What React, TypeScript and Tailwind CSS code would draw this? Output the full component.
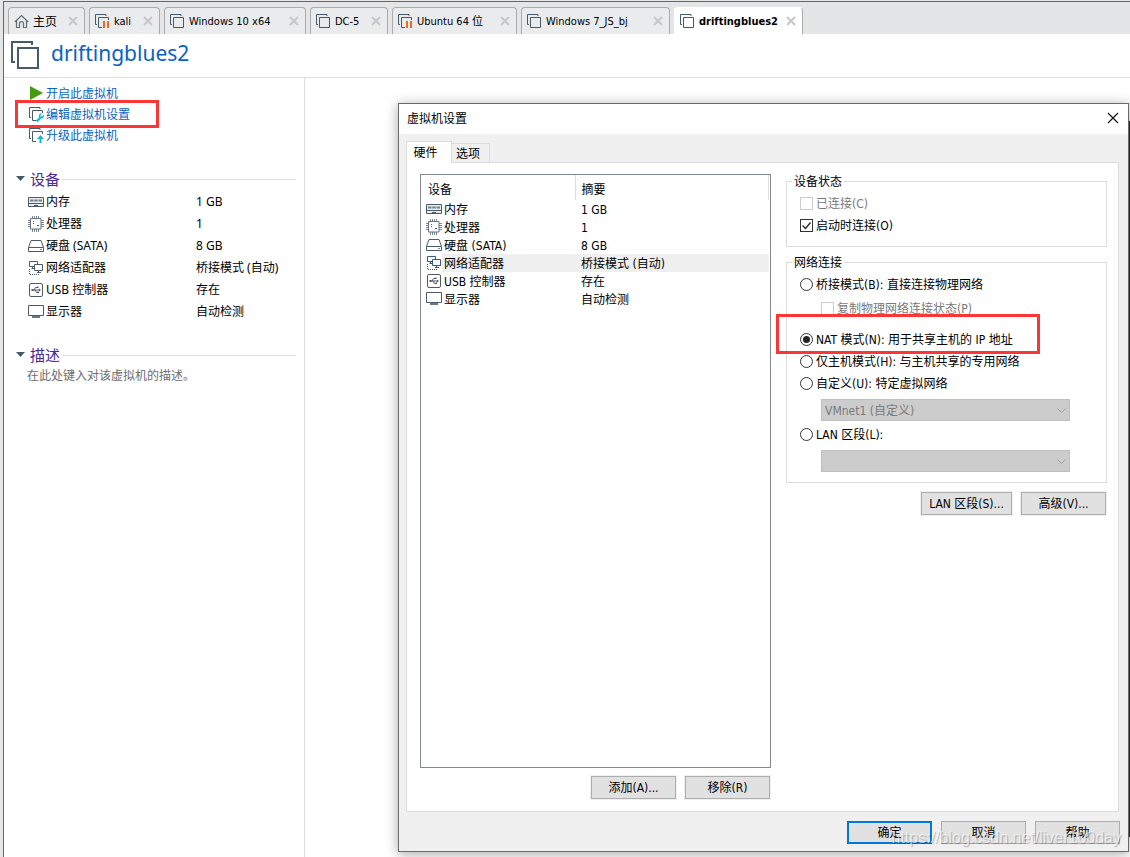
import { useState } from "react";
import type { ReactNode } from "react";
import clsx from "clsx";

type IconName = "memory" | "cpu" | "disk" | "network" | "usb" | "display";

type Device = {
  icon: IconName;
  name: string;
  value: string;
};

type Tab = {
  label: string;
  icon: "home" | "vm" | "paused";
  width: string;
};

const tabs: Tab[] = [
  { label: "主页", icon: "home", width: "w-[77px]" },
  { label: "kali", icon: "paused", width: "w-[71px]" },
  { label: "Windows 10 x64", icon: "vm", width: "w-[142px]" },
  { label: "DC-5", icon: "vm", width: "w-[78px]" },
  { label: "Ubuntu 64 位", icon: "paused", width: "w-[125px]" },
  { label: "Windows 7_JS_bj", icon: "vm", width: "w-[149px]" },
  { label: "driftingblues2", icon: "vm", width: "w-[129px]" },
];

const devices: Device[] = [
  { icon: "memory", name: "内存", value: "1 GB" },
  { icon: "cpu", name: "处理器", value: "1" },
  { icon: "disk", name: "硬盘 (SATA)", value: "8 GB" },
  { icon: "network", name: "网络适配器", value: "桥接模式 (自动)" },
  { icon: "usb", name: "USB 控制器", value: "存在" },
  { icon: "display", name: "显示器", value: "自动检测" },
];

function VmIcon({ badge, size = 15 }: { badge?: ReactNode; size?: number }) {
  return (
    <svg
      width={size}
      height={size}
      viewBox="0 0 15 15"
      fill="none"
      stroke="#465a69"
      className="shrink-0"
    >
      <path d="M2 10.5H.5V.5H11V2" />
      {badge ? <path d="M7 13.5H3.5V3.5H13.5V6" /> : <path d="M3.5 3.5h10v10h-10z" />}
      {badge}
    </svg>
  );
}

const pauseBadge = (
  <path d="M8 7h2v7H8zM12 7h2v7h-2z" fill="#f26a21" stroke="none" />
);

const wrenchBadge = (
  <>
    <path d="M7.5 14.5l4-4" stroke="#12b5d3" strokeWidth="2.2" />
    <path
      d="M13.2 6L11.5 7.8v1.7h1.7L15 7.800c.5 2.200-1 4-3 3.700-1.800-.3-2.500-2-2-3.500.5-1.500 1.900-2.300 3.200-2z"
      fill="#12b5d3"
      stroke="none"
    />
  </>
);

const upBadge = (
  <path d="M11.500 7L8 11h2.500v4h2v-4H15z" fill="#12b5d3" stroke="none" />
);

function HomeIcon() {
  return (
    <svg
      width="15"
      height="15"
      viewBox="0 0 15 15"
      fill="none"
      stroke="#5d6e7a"
      strokeWidth="1.2"
      className="shrink-0"
    >
      <path d="M.8 8L7.500 1.500 14.200 8" />
      <path d="M2.500 7v6.500h3V9.500c0-2.600 4-2.600 4 0v4h3V7" />
    </svg>
  );
}

function DeviceIcon({ name, active }: { name: IconName; active?: boolean }) {
  return (
    <svg
      width="16"
      height="16"
      viewBox="0 0 16 16"
      fill="none"
      stroke={active ? "#2c5a85" : "#4b5b67"}
      className="shrink-0"
    >
      {name === "memory" && (
        <>
          <path d="M.5 3.500h15v9H.5z" fill="#e9edf0" />
          <path d="M2 6.500h3.500M6.200 6.500h3.500M10.500 6.500H14" strokeWidth="2" stroke="#71808b" />
          <path d="M.5 9.500h15" />
          <path d="M6 11.500h4" />
        </>
      )}
      {name === "cpu" && (
        <>
          <path
            d="M4.500 0v3M6.500 0v3M8.500 0v3M10.500 0v3M4.500 13v3M6.500 13v3M8.500 13v3M10.500 13v3M0 4.500h3M0 6.500h3M0 8.500h3M0 10.500h3M13 4.500h3M13 6.500h3M13 8.500h3M13 10.500h3"
            stroke="#7d8991"
          />
          <path d="M2.500 2.500h10.500v10.500h-10.500z" fill="#fff" stroke="#66757f" />
          <path d="M5 5.500h1M9 9.500h2M5 7.500h1" />
        </>
      )}
      {name === "disk" && (
        <>
          <path d="M3 2.500h10l2.500 7v4H.5v-4z" />
          <path d="M.5 9.500h15" />
          <path d="M12 11.500h2" stroke="#7d8991" />
        </>
      )}
      {name === "network" && (
        <>
          <path d="M6 6.500H1.500v-5h8V4" />
          <path d="M3.500 8.500H6M4.500 6.500v2" />
          <path d="M6.500 4.500h8v6h-8z" fill="#fff" />
          <path d="M9 12.500h4M10.500 10.500v2" />
          <path d="M1.500 9v5.500H11" strokeDasharray="1 1" />
        </>
      )}
      {name === "usb" && (
        <>
          <rect x="1.500" y="1.500" width="13" height="13" rx="1.500" />
          <path d="M4 8h7M6 8l1.500-2.500h1.500M7 8l1.500 2.500h1.500" />
          <path d="M3.500 7h2v2h-2zM11 6.500v3L13 8zM9 4.500h1.500V6H9zM9.500 9.500H11V11H9.500z" fill="#4b5b67" stroke="none" />
        </>
      )}
      {name === "display" && (
        <>
          <path d="M.500 1.500h15v10H.500z" />
          <path d="M4 13h8" strokeWidth="2" stroke="#6b7880" />
        </>
      )}
    </svg>
  );
}

function TabBar() {
  const [active, setActive] = useState("driftingblues2");

  return (
    <nav className="flex h-8 items-end gap-1 bg-[#e4e5e6] pl-1 font-['DejaVu_Sans_Condensed','Noto_Sans_CJK_SC',sans-serif]">
      {tabs.map((tab) => (
        <div
          key={tab.label}
          className={clsx(
            "flex h-[27px] items-center rounded-t border border-b-0 pr-[6px] pl-[5px]",
            tab.width,
            tab.label === active
              ? "border-white border-r-[#a9abae] bg-white font-bold"
              : "border-[#a9abae] bg-[#eaebed]",
          )}
        >
          <button
            className="flex min-w-0 flex-1 items-center gap-1 whitespace-nowrap"
            onClick={() => setActive(tab.label)}
          >
            {tab.icon === "home" ? (
              <HomeIcon />
            ) : (
              <VmIcon badge={tab.icon === "paused" ? pauseBadge : undefined} />
            )}
            <span className={clsx("pt-[2px]", tab.icon === "home" ? "text-[12px]" : "text-[11px]")}>
              {tab.label}
            </span>
          </button>
          <button aria-label="关闭" className="shrink-0">
            <svg width="10" height="10" viewBox="0 0 10 10" stroke="#c6c7c9" strokeWidth="2">
              <path d="M1 1l8 8M9 1L1 9" />
            </svg>
          </button>
        </div>
      ))}
    </nav>
  );
}

function SectionTitle({ children }: { children: ReactNode }) {
  return (
    <h2 className="flex h-[22px] items-center pr-2 pl-[11px] text-[15px] leading-[22px] text-[#4a2a9c]">
      <svg width="11" height="6" viewBox="0 0 11 6" className="mr-1 shrink-0">
        <path d="M1 0h9L5.500 5z" fill="#465a69" />
      </svg>
      {children}
      <span className="ml-[2px] h-px flex-1 bg-[#dedede]" />
    </h2>
  );
}

function Sidebar() {
  return (
    <aside className="w-[301px] shrink-0 border-r border-[#dedede] pt-[5px] text-[12px]">
      <ul className="text-[#0a62c4]">
        <li>
          <a href="#start" className="flex h-[21px] items-center gap-[2px] pl-[25px]">
            <svg width="15" height="15" viewBox="0 0 15 15">
              <path d="M1 0v14l13-7z" fill="#459a12" />
            </svg>
            开启此虚拟机
          </a>
        </li>
        <li className="relative">
          <a href="#edit" className="flex h-[21px] items-center gap-[2px] pl-[25px]">
            <VmIcon badge={wrenchBadge} />
            编辑虚拟机设置
          </a>
          <span className="pointer-events-none absolute -top-1 left-[11px] h-7 w-[144px] border-3 border-[#fb3635]" />
        </li>
        <li>
          <a href="#upgrade" className="flex h-[21px] items-center gap-[2px] pl-[25px]">
            <VmIcon badge={upBadge} />
            升级此虚拟机
          </a>
        </li>
      </ul>

      <section className="mt-[22px]">
        <SectionTitle>设备</SectionTitle>
        <table className="mt-px w-full table-fixed">
          <tbody>
            {devices.map((d) => (
              <tr key={d.icon} className="h-[22px]">
                <td className="w-[192px] pl-6">
                  <span className="flex items-center gap-[2px]">
                    <DeviceIcon name={d.icon} />
                    {d.name}
                  </span>
                </td>
                <td>{d.value}</td>
              </tr>
            ))}
          </tbody>
        </table>
      </section>

      <section className="mt-[21px]">
        <SectionTitle>描述</SectionTitle>
        <p className="pl-[23px] leading-[20px] text-[#6d6d6d]">在此处键入对该虚拟机的描述。</p>
      </section>
    </aside>
  );
}

function Button({
  children,
  primary,
  wide,
}: {
  children: ReactNode;
  primary?: boolean;
  wide?: boolean;
}) {
  return (
    <button
      className={clsx(
        "flex h-[23px] items-center justify-center bg-[#e1e1e1] pt-px whitespace-nowrap outline-1 outline-[#f0f0f0]",
        wide ? "w-[91px]" : "w-[85px]",
        primary ? "border-2 border-[#0078d7]" : "border border-[#adadad]",
      )}
    >
      {children}
    </button>
  );
}

function DeviceList() {
  const [selected, setSelected] = useState<IconName>("network");

  return (
    <div className="flex-1 border border-[#828790] pr-px">
      <table className="w-full table-fixed leading-[16px]">
        <colgroup>
          <col className="w-[21px]" />
          <col className="w-[133px]" />
          <col />
        </colgroup>
        <thead>
          <tr className="h-[25px] text-left">
            <th colSpan={2} className="border-r border-[#dedede] pt-1 pl-[7px] font-normal">
              设备
            </th>
            <th className="border-r border-[#dedede] pt-1 pl-[6px] font-normal">摘要</th>
          </tr>
        </thead>
        <tbody>
          {devices.map((d) => {
            const active = d.icon === selected;
            return (
              <tr key={d.icon} className="h-[18px]" onClick={() => setSelected(d.icon)}>
                <td className="pl-[5px]">
                  <DeviceIcon name={d.icon} active={active} />
                </td>
                <td className={clsx("pt-[2px] pl-[2px]", active && "bg-[#efefef]")}>{d.name}</td>
                <td className={clsx("pt-[2px] pl-[6px]", active && "bg-[#efefef]")}>{d.value}</td>
              </tr>
            );
          })}
        </tbody>
      </table>
    </div>
  );
}

function Checkbox({
  label,
  checked,
  disabled,
}: {
  label: string;
  checked?: boolean;
  disabled?: boolean;
}) {
  return (
    <label
      className={clsx("flex h-[22px] w-fit items-center gap-[3px]", disabled && "text-[#7a7a7a]")}
    >
      <span className="relative size-[13px]">
        <input
          type="checkbox"
          defaultChecked={checked}
          disabled={disabled}
          className="peer block size-[13px] appearance-none border border-[#333] bg-white disabled:border-[#ccc]"
        />
        <svg
          viewBox="0 0 13 13"
          className="pointer-events-none absolute inset-0 hidden size-[13px] peer-checked:block"
        >
          <path d="M2.500 6.500l3 3 5-6" fill="none" stroke="#222" strokeWidth="1.300" />
        </svg>
      </span>
      <span className="pt-[2px]">{label}</span>
    </label>
  );
}

function Radio({
  label,
  value,
  mode,
  onChange,
}: {
  label: string;
  value: string;
  mode: string;
  onChange: (v: string) => void;
}) {
  return (
    <label className="flex h-[22px] w-fit items-center gap-[3px] whitespace-nowrap">
      <input
        type="radio"
        name="mode"
        checked={mode === value}
        onChange={() => onChange(value)}
        className="grid size-[13px] appearance-none place-items-center rounded-full border border-[#333] bg-white before:size-[7px] before:rounded-full checked:before:bg-[#222]"
      />
      <span className="pt-[2px]">{label}</span>
    </label>
  );
}

function Dropdown({ label, option }: { label: string; option: string }) {
  return (
    <div className="relative ml-[21px] w-[249px]">
      <select
        disabled
        aria-label={label}
        className="block h-[22px] w-full appearance-none border border-[#bfbfbf] bg-[#ccc] pt-[2px] pl-[3px] text-[#7a7a7a] opacity-100"
      >
        <option>{option}</option>
      </select>
      <svg
        width="9"
        height="6"
        viewBox="0 0 9 6"
        fill="none"
        stroke="#a0a0a0"
        className="pointer-events-none absolute top-[9px] right-1"
      >
        <path d="M.5.500l4 4 4-4" />
      </svg>
    </div>
  );
}

function NetworkPanel() {
  const [mode, setMode] = useState("nat");

  return (
    <div className="-mt-px flex-1">
      <fieldset className="border border-[#dcdcdc] px-[13px] pt-[2px] pb-[10px]">
        <legend className="-ml-2 px-[2px] pt-[2px] leading-[15px]">设备状态</legend>
        <Checkbox label="已连接(C)" disabled />
        <Checkbox label="启动时连接(O)" checked />
      </fieldset>

      <fieldset className="mt-[7px] border border-[#dcdcdc] px-[13px] pt-[2px] pb-[10px]">
        <legend className="-ml-2 px-[2px] pt-[2px] leading-[15px]">网络连接</legend>
        <Radio label="桥接模式(B): 直接连接物理网络" value="bridged" mode={mode} onChange={setMode} />
        <div className="mt-[2px] ml-[21px]">
          <Checkbox label="复制物理网络连接状态(P)" disabled />
        </div>
        <div className="relative mt-[9px]">
          <Radio label="NAT 模式(N): 用于共享主机的 IP 地址" value="nat" mode={mode} onChange={setMode} />
          <span className="pointer-events-none absolute -top-[14px] -left-6 h-10 w-[264px] border-3 border-[#fb3635]" />
        </div>
        <Radio label="仅主机模式(H): 与主机共享的专用网络" value="host" mode={mode} onChange={setMode} />
        <Radio label="自定义(U): 特定虚拟网络" value="custom" mode={mode} onChange={setMode} />
        <div className="mt-[5px] mb-[2px]">
          <Dropdown label="自定义网络" option="VMnet1 (自定义)" />
        </div>
        <Radio label="LAN 区段(L):" value="lan" mode={mode} onChange={setMode} />
        <div className="mt-[5px]">
          <Dropdown label="LAN 区段" option="" />
        </div>
      </fieldset>

      <div className="mt-[9px] mr-px flex justify-end gap-[9px]">
        <Button wide>LAN 区段(S)...</Button>
        <Button>高级(V)...</Button>
      </div>
    </div>
  );
}

function SettingsDialog() {
  return (
    <div
      role="dialog"
      aria-label="虚拟机设置"
      className="absolute top-[103px] right-px bottom-[5px] left-[398px] flex flex-col border border-[#6a6a6a] bg-[#f0f0f0] font-['DejaVu_Sans_Condensed','Noto_Sans_CJK_SC',sans-serif] text-[12px] shadow-[0_2px_12px_rgba(0,0,0,0.35)]"
    >
      <div className="flex h-[30px] items-center justify-between bg-white pr-[9px] pl-2">
        <h2>虚拟机设置</h2>
        <button aria-label="关闭" className="pb-[2px]">
          <svg width="12" height="12" viewBox="0 0 12 12" stroke="#111" strokeWidth="1.200">
            <path d="M1 1l10 10M11 1L1 11" />
          </svg>
        </button>
      </div>

      <div className="flex flex-1 flex-col pt-[7px] pr-[9px] pb-[7px] pl-[7px]">
        <div role="tablist" className="flex items-end">
          <button
            role="tab"
            aria-selected="true"
            className="relative z-10 -mb-px h-[22px] w-[46px] border border-b-0 border-[#dcdcdc] bg-white pr-[7px]"
          >
            硬件
          </button>
          <button
            role="tab"
            aria-selected="false"
            className="h-[19px] w-[38px] border border-b-0 border-l-0 border-[#dcdcdc] pt-[2px] pr-[5px] leading-[16px]"
          >
            选项
          </button>
        </div>

        <div className="flex flex-1 gap-[15px] border border-[#dcdcdc] bg-white pt-[11px] pr-[11px] pb-3 pl-[13px]">
          <div className="flex w-[351px] shrink-0 flex-col">
            <DeviceList />
            <div className="mt-2 mr-px flex justify-end gap-[9px]">
              <Button>添加(A)...</Button>
              <Button>移除(R)</Button>
            </div>
          </div>
          <NetworkPanel />
        </div>

        <div className="mt-[9px] -mr-px flex justify-end gap-[9px]">
          <Button primary>确定</Button>
          <Button>取消</Button>
          <Button>帮助</Button>
        </div>
      </div>
    </div>
  );
}

export default function App() {
  return (
    <main className="relative flex min-h-screen flex-col overflow-hidden bg-[#e6e6e6] pt-px pl-[3px] font-['Noto_Sans','Noto_Sans_CJK_SC',sans-serif] text-black">
      <div className="flex flex-1 flex-col border-t border-l border-[#666] bg-white">
        <TabBar />
        <header className="flex h-11 items-center gap-3 border-b border-[#dedede] pb-[2px] pl-[7px]">
          <svg width="28" height="28" viewBox="0 0 28 28" fill="none" stroke="#465a69" strokeWidth="2">
            <path d="M4 21H1V1h20v3" />
            <path d="M7 7h20v20H7z" />
          </svg>
          <h1 className="pb-1 text-[21px] leading-[28px] text-[#0a62c4]">driftingblues2</h1>
        </header>
        <div className="flex flex-1">
          <Sidebar />
        </div>
      </div>

      <div className="absolute top-[121px] right-0 bottom-5 w-px bg-[#2b2b2b]" />
      <SettingsDialog />
      <span className="pointer-events-none absolute right-[9px] bottom-[9px] font-['Liberation_Sans',sans-serif] text-[16px] leading-[20px] text-white/60 [text-shadow:1px_1px_1px_rgba(0,0,0,0.25)]">
        https://blog.csdn.net/liver100day
      </span>
    </main>
  );
}
